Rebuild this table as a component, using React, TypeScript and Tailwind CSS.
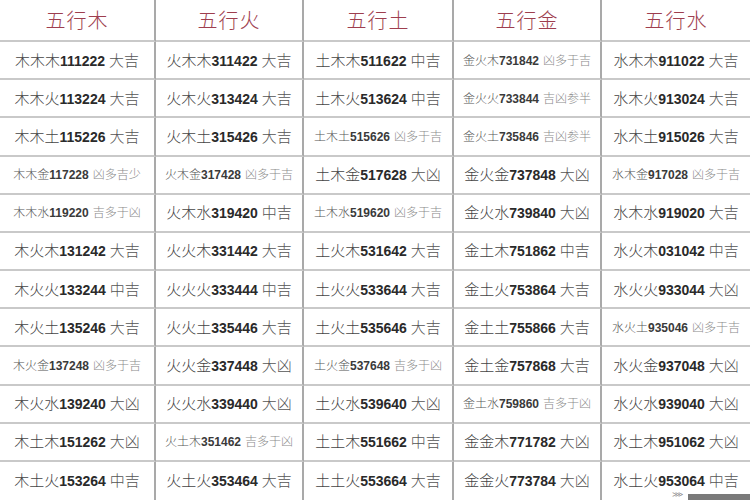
import React from 'react';

const heads = ['五行木', '五行火', '五行土', '五行金', '五行水'];

const columns: string[][] = [
  [
    '木木木111222 大吉', '木木火113224 大吉', '木木土115226 大吉', '木木金117228 凶多吉少',
    '木木水119220 吉多于凶', '木火木131242 大吉', '木火火133244 中吉', '木火土135246 大吉',
    '木火金137248 凶多于吉', '木火水139240 大凶', '木土木151262 大凶', '木土火153264 中吉',
  ],
  [
    '火木木311422 大吉', '火木火313424 大吉', '火木土315426 大吉', '火木金317428 凶多于吉',
    '火木水319420 中吉', '火火木331442 大吉', '火火火333444 中吉', '火火土335446 大吉',
    '火火金337448 大凶', '火火水339440 大凶', '火土木351462 吉多于凶', '火土火353464 大吉',
  ],
  [
    '土木木511622 中吉', '土木火513624 中吉', '土木土515626 凶多于吉', '土木金517628 大凶',
    '土木水519620 凶多于吉', '土火木531642 大吉', '土火火533644 大吉', '土火土535646 大吉',
    '土火金537648 吉多于凶', '土火水539640 大凶', '土土木551662 中吉', '土土火553664 大吉',
  ],
  [
    '金火木731842 凶多于吉', '金火火733844 吉凶参半', '金火土735846 吉凶参半', '金火金737848 大凶',
    '金火水739840 大凶', '金土木751862 中吉', '金土火753864 大吉', '金土土755866 大吉',
    '金土金757868 大吉', '金土水759860 吉多于凶', '金金木771782 大凶', '金金火773784 大凶',
  ],
  [
    '水木木911022 大吉', '水木火913024 大吉', '水木土915026 大吉', '水木金917028 凶多于吉',
    '水木水919020 大吉', '水火木031042 中吉', '水火火933044 大凶', '水火土935046 凶多于吉',
    '水火金937048 大凶', '水火水939040 大凶', '水土木951062 大凶', '水土火953064 中吉',
  ],
];

const cjk = "font-['Noto_Sans_CJK_SC',sans-serif] font-light";
const num = "font-['Liberation_Sans',Arial,sans-serif] font-bold";

function Cell({ text, last, bottom }: { text: string; last: boolean; bottom: boolean }) {
  const [left, suffix] = text.split(' ');
  const prefix = left.slice(0, 3);
  const digits = left.slice(3);
  const small = suffix.length === 4;

  return (
    <div
      className={`flex items-center justify-center ${bottom ? '' : 'border-b-2 border-[#c9c9c9]'} ${
        last ? '' : 'border-r-2 border-r-[#a9a9a9]'
      }`}
    >
      {small ? (
        <span className="flex items-baseline whitespace-nowrap">
          <span className={`${cjk} text-[12px] text-[#555]`}>{prefix}</span>
          <span className={`${num} text-[12px] text-[#3a3a3a]`}>{digits}</span>
          <span className={`${cjk} text-[12px] text-[#8a8a8a] ml-1`}>{suffix}</span>
        </span>
      ) : (
        <span className="flex items-baseline whitespace-nowrap">
          <span className={`${cjk} text-[15px] text-[#444]`}>{prefix}</span>
          <span className={`${num} text-[14px] text-[#2a2a2a]`}>{digits}</span>
          <span className={`${cjk} text-[15px] text-[#555] ml-1`}>{suffix}</span>
        </span>
      )}
    </div>
  );
}

export default function App() {
  const rows = Array.from({ length: 12 }, (_, i) => i);

  return (
    <div className="relative w-[750px] h-[500px] overflow-hidden bg-white">
      <div className="grid h-full grid-cols-[156px_148px_150px_148px_148px] grid-rows-[42px_repeat(12,minmax(0,1fr))]">
        {heads.map((h, c) => (
          <div
            key={h}
            className={`flex items-center justify-center border-b-2 border-[#c9c9c9] ${
              c === 4 ? '' : 'border-r-2 border-r-[#a9a9a9]'
            }`}
          >
            <span className={`${cjk} text-[20px] text-[#9e3e4e] tracking-[1px]`}>{h}</span>
          </div>
        ))}
        {rows.map((r) =>
          columns.map((col, c) => (
            <Cell key={`${r}-${c}`} text={col[r]} last={c === 4} bottom={r === 11} />
          ))
        )}
      </div>
      {/* watermark bits at the bottom right corner */}
      <div className="absolute right-0 bottom-0 w-[62px] h-[6px] bg-[#7a7a7a]" />
      <div className="absolute left-[672px] bottom-[2px] text-[8px] leading-none text-[#888]">⋙</div>
    </div>
  );
}
